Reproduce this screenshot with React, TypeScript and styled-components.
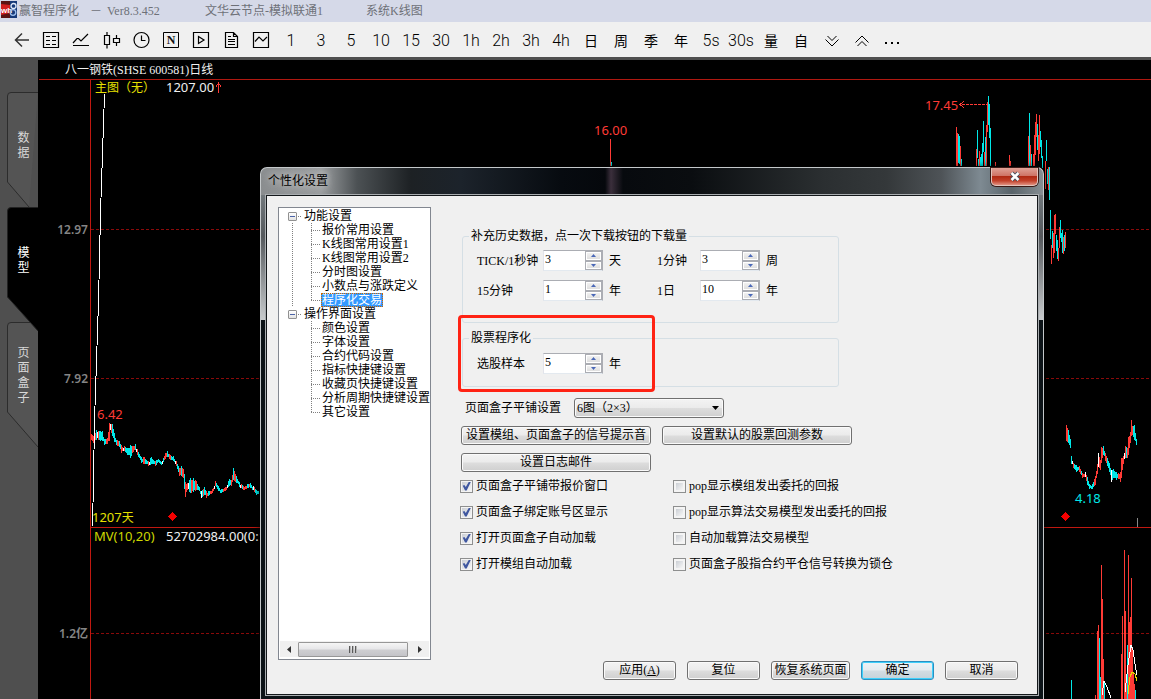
import React, { useState } from "react";
import styled, { createGlobalStyle, css } from "styled-components";

const CJK = `"Noto Sans CJK SC", sans-serif`;
const RED = "#ff3b36";
const CYAN = "#00e8e8";

const GlobalStyle = createGlobalStyle`
  * { box-sizing: border-box; }
  body { margin: 0; background: #000; font-family: "Liberation Serif", ${CJK}; font-size: 12px; line-height: 14px; color: #000; }
  button, input, select { font: inherit; color: inherit; margin: 0; }
  ul { list-style: none; margin: 0; padding: 0; }
`;

const Desktop = styled.div`
  position: relative;
  display: flex;
  flex-direction: column;
  height: 100vh;
  overflow: hidden;
`;

/* ---------- title bar and toolbar ---------- */

const TitleBar = styled.header`
  display: flex;
  align-items: center;
  height: 22px;
  padding: 0 1px;
  background: #d5d9e8;
  color: #6e7178;
  white-space: nowrap;
`;

const TitlePart = styled.span<{ $width: number }>`
  flex: none;
  width: ${(p) => p.$width}px;
`;

const ToolBar = styled.nav`
  display: flex;
  align-items: center;
  height: 35px;
  padding: 0 6px;
  background: #f0f0f0;
`;

const Tool = styled.button<{ $kind?: "latin" | "cjk" }>`
  display: flex;
  align-items: center;
  justify-content: center;
  flex: none;
  width: 30px;
  height: 30px;
  padding: ${(p) => (p.$kind ? "2px 0 0" : "0")};
  border: 0;
  background: none;
  font-family: Roboto, ${CJK};
  font-weight: ${(p) => (p.$kind === "latin" ? 300 : 400)};
  font-size: ${(p) => (p.$kind === "latin" ? 16 : 14)}px;
  line-height: 20px;
`;

const Glyph = styled.svg`
  display: block;
  width: 20px;
  height: 20px;
  fill: none;
  stroke: #000;
  stroke-width: 1;
`;

/* ---------- workspace ---------- */

const Workspace = styled.main`
  display: flex;
  flex: 1;
  min-height: 0;
  border-top: 3px solid #4f4f4f;
  background: #000;
`;

const SideTabs = styled.nav`
  flex: none;
  width: 38px;
  padding: 32px 0 0 7px;
  background: #4f4f4f;
`;

const SideTab = styled.button<{ $active?: boolean }>`
  position: relative;
  z-index: ${(p) => (p.$active ? 1 : 0)};
  display: flex;
  align-items: center;
  justify-content: center;
  width: 31px;
  height: 115px;
  padding: 0 0 8px 2px;
  border: 0;
  background: none;
  color: ${(p) => (p.$active ? "#fff" : "#d8d8d8")};
  line-height: 15px;
`;

const TabShape = styled.svg`
  position: absolute;
  inset: 0 auto auto 0;
  width: 31px;
  height: 126px;
`;

const TabText = styled.span`
  position: relative;
  width: 12px;
  white-space: normal;
  word-break: break-all;
`;

const ChartPane = styled.section`
  display: flex;
  flex-direction: column;
  flex: 1;
  min-width: 0;
`;

const ChartTitle = styled.h1`
  height: 20px;
  margin: 0 0 0 1px;
  padding-left: 26px;
  border-bottom: 1px solid #b01810;
  color: #f0f0f0;
  font-size: 12px;
  font-weight: 400;
  line-height: 20px;
`;

const Plot = styled.svg`
  display: block;
  flex: 1;
  width: 100%;
  min-height: 0;
  overflow: visible;
  font-family: "Noto Sans", ${CJK};
  font-size: 13px;
`;

/* ---------- dialog ---------- */

const Dialog = styled.section`
  position: absolute;
  z-index: 2;
  top: 167px;
  right: 107px;
  bottom: 0;
  left: 260px;
  display: flex;
  flex-direction: column;
  min-width: 784px;
  padding: 0 4px 3px;
  border: 1px solid #c4c8ca;
  border-bottom: 0;
  border-radius: 7px 7px 0 0;
  background:
    linear-gradient(90deg, #8a8d8f 0, #9a9d9f 60px, #4c5154 96px, #1d2124 150px, #1c232b 200px, #070b10 300px, #05080c 44%, #3b2f3c 350px, #070a0e 362px, #0a0d10 55%, #2b2f31 72%, #34383a 80%, #4e5357 87%, #7e8a92 92%, #59646a 96%, #868e93 100%) 0 0 / 100% 27px no-repeat,
    linear-gradient(#858d91, #55595d 45%, #c8cbcd) 0 0 / 100% 152px no-repeat,
    #0c1317;
  box-shadow: 0 0 6px 1px rgba(0, 0, 0, 0.6);
`;

const DialogBar = styled.header`
  display: flex;
  justify-content: space-between;
  flex: none;
  height: 26px;
  padding: 0 1px 0 3px;
`;

const DialogTitle = styled.h2`
  margin: 0;
  font-size: 12px;
  font-weight: 400;
  line-height: 26px;
  text-shadow: 0 0 6px #c8c8c8, 0 0 8px #c8c8c8;
`;

const CloseButton = styled.button`
  display: flex;
  align-items: center;
  justify-content: center;
  width: 47px;
  height: 18px;
  padding: 0 0 1px;
  border: 1px solid #e3c3bb;
  border-top: 0;
  border-radius: 0 0 5px 5px;
  background: linear-gradient(#dfa196, #cf7466 45%, #b02a14 50%, #c2402a 75%, #e09080);
  box-shadow: 0 0 0 1px #3a1a16;
`;

const Client = styled.div`
  display: flex;
  flex: 1;
  min-height: 0;
  border: 1px solid #a9adb0;
`;

const Body = styled.form`
  display: flex;
  flex-direction: column;
  flex: 1;
  min-width: 0;
  padding: 11px 19px 14px 11px;
  border: 1px solid #14181b;
  background: #f0f0f0;
`;

const Columns = styled.div`
  display: flex;
  gap: 30px;
  flex: 1;
  min-height: 0;
`;

/* ---------- settings tree ---------- */

const TreePane = styled.nav`
  display: flex;
  flex-direction: column;
  flex: none;
  width: 153px;
  padding: 1px 0 2px;
  border: 1px solid #828790;
  background: #fff;
`;

const TreeList = styled.ul`
  flex: 1;
  min-height: 0;
  overflow: hidden;
  white-space: nowrap;
`;

const RootRow = styled.div`
  display: flex;
  align-items: center;
  height: 14px;
  padding-left: 9px;

  &::after {
    content: "";
    order: 1;
    width: 4px;
    height: 1px;
    margin-right: 3px;
    background: repeating-linear-gradient(90deg, transparent 0 1px, #808080 1px 2px);
  }
`;

const Toggle = styled.button`
  display: flex;
  align-items: center;
  justify-content: center;
  width: 9px;
  height: 9px;
  padding: 0;
  border: 1px solid #919191;
  border-radius: 1px;
  background: linear-gradient(#fff, #e2e2e2);

  &::after {
    content: "";
    width: 5px;
    height: 1px;
    background: #4b63a7;
  }
`;

const RootLabel = styled.span`
  order: 2;
`;

const Branch = styled.ul<{ $linked?: boolean }>`
  padding-left: 32px;
  ${(p) =>
    p.$linked &&
    css`
      background: repeating-linear-gradient(#808080 0 1px, transparent 1px 2px) 13px 0 / 1px 100% no-repeat;
    `}
`;

const Leaf = styled.li`
  display: flex;
  align-items: center;
  height: 14px;

  &::before {
    content: "";
    flex: none;
    width: 9px;
    height: 14px;
    margin-right: 1px;
    background:
      repeating-linear-gradient(90deg, #808080 0 1px, transparent 1px 2px) 0 7px / 100% 1px no-repeat,
      repeating-linear-gradient(#808080 0 1px, transparent 1px 2px) 0 0 / 1px 100% no-repeat;
  }
  &:last-child::before {
    background-size: 100% 1px, 1px 8px;
  }
`;

const LeafLink = styled.a<{ $selected?: boolean }>`
  height: 14px;
  padding: 0 1px;
  color: ${(p) => (p.$selected ? "#fff" : "#000")};
  background: ${(p) => (p.$selected ? "#3399ff" : "none")};
  outline: ${(p) => (p.$selected ? "1px dotted #cc6600" : "none")};
  outline-offset: -1px;
  text-decoration: none;
`;

const ScrollBar = styled.div`
  display: flex;
  align-items: center;
  flex: none;
  height: 16px;
  margin: 0 1px;
  background: #f0f0f0;
`;

const ScrollArrow = styled.button`
  display: flex;
  align-items: center;
  justify-content: center;
  width: 18px;
  height: 16px;
  padding: 0;
  border: 0;
  background: none;
`;

const Thumb = styled.div`
  display: flex;
  align-items: center;
  justify-content: center;
  gap: 1px;
  flex: none;
  width: 110px;
  height: 15px;
  margin-right: 3px;
  border: 1px solid #979797;
  border-radius: 1px;
  background: linear-gradient(#f5f5f5, #e6e6e8 48%, #cfcfd2 52%, #c4c4c8);

  & > i {
    width: 2px;
    height: 7px;
    background: linear-gradient(90deg, #5a5a5a 50%, #b8b8b8 50%);
  }
`;

/* ---------- settings form ---------- */

const Settings = styled.div`
  display: flex;
  flex-direction: column;
  align-items: flex-start;
  flex: 1;
  min-width: 0;
`;

const Group = styled.fieldset<{ $top: number; $pad: string }>`
  position: relative;
  width: 377px;
  margin: ${(p) => p.$top}px 0 0 1px;
  padding: ${(p) => p.$pad};
  border: 1px solid #d5dfe5;
  border-radius: 3px;
`;

const GroupTitle = styled.legend`
  height: 14px;
  padding: 0 2px;
`;

const Mark = styled.span`
  position: absolute;
  inset: -30px auto auto -5px;
  width: 197px;
  height: 77px;
  border: 3px solid #ff2314;
  border-radius: 4px;
  pointer-events: none;
`;

const FieldGrid = styled.div`
  display: grid;
  grid-template-columns: 66px 60px 54px 43px 60px auto;
  align-items: center;
  row-gap: 9px;
  padding-left: 8px;
`;

const Unit = styled.span`
  padding-left: 6px;
`;

const SpinFrame = styled.div`
  display: flex;
  width: 60px;
  height: 21px;
  border: 1px solid;
  border-color: #abadb3 #abadb3 #e3e9ef #e2e3ea;
  background: #fff;
`;

const SpinInput = styled.input`
  flex: 1;
  min-width: 0;
  height: 16px;
  padding: 0 1px;
  border: 0;
  outline: 0;
  background: transparent;
  line-height: 16px;
`;

const SpinButtons = styled.div`
  display: flex;
  flex-direction: column;
  width: 17px;
  background: #f0f0f0;
`;

const SpinButton = styled.button`
  display: flex;
  align-items: center;
  justify-content: center;
  flex: 1;
  padding: 0;
  border: 1px solid #abadb3;
  box-shadow: inset 0 0 0 1px #fff;
  background: linear-gradient(#f4f4f4, #dcdcdc);
`;

const ComboRow = styled.div`
  display: flex;
  align-items: center;
  gap: 13px;
  margin-top: 11px;
  padding-left: 4px;
`;

const Combo = styled.div`
  display: grid;
  align-items: center;
  width: 150px;
  height: 20px;

  & > * {
    grid-area: 1 / 1;
  }
  & > svg {
    justify-self: end;
    margin-right: 5px;
    pointer-events: none;
  }
`;

const raised = css`
  border: 1px solid #707070;
  border-radius: 3px;
  background: linear-gradient(#f3f3f3, #ebebeb 48%, #dddddd 52%, #cfcfcf);
  box-shadow: inset 0 0 0 1px #fafafa;
`;

const ComboSelect = styled.select`
  appearance: none;
  width: 100%;
  height: 20px;
  padding: 0 18px 0 2px;
  ${raised}
`;

const PushButton = styled.button<{ $width: number; $primary?: boolean }>`
  width: ${(p) => p.$width}px;
  height: 19px;
  padding: 0;
  ${raised}
  line-height: 17px;
  white-space: nowrap;
  ${(p) =>
    p.$primary &&
    css`
      border-color: #2c8fc0;
      background: linear-gradient(#eef3f6, #e4ebef 48%, #d3dde3 52%, #c5d2da);
      box-shadow: inset 0 0 0 1px #3fd0fb;
    `}
`;

const ButtonRow = styled.div`
  display: flex;
  gap: 11px;
  margin-top: 8px;
`;

const Options = styled.div`
  display: grid;
  grid-template-columns: 213px auto;
  grid-auto-rows: 26px;
  margin-top: 1px;
  margin-left: -1px;
`;

const Option = styled.label`
  display: flex;
  align-items: center;
  gap: 3px;
  white-space: nowrap;
`;

const Tick = styled.input`
  appearance: none;
  display: block;
  flex: none;
  width: 13px;
  height: 13px;
  border: 1px solid #8e8f8f;
  background: linear-gradient(135deg, #cbcfd5, #f6f6f6) content-box, #f4f4f4;
  padding: 2px;

  &:checked {
    padding: 1px;
  }
  &:checked::after {
    content: "";
    display: block;
    width: 9px;
    height: 9px;
    background: #3f57a0;
    clip-path: polygon(8% 48%, 26% 40%, 42% 62%, 78% 0, 100% 0, 52% 100%, 34% 100%);
  }
`;

const Footer = styled.footer`
  display: flex;
  justify-content: flex-end;
  gap: 11px;
  margin-top: 1px;
`;

/* ---------- data ---------- */

type Bar = [number, number, number, 0 | 1];

const spikes: Bar[] = [
  [610, 139, 166, 1], [611, 162, 166, 0],
  [956, 127, 166, 1], [957, 133, 166, 1], [958, 134, 163, 0], [959, 136, 164, 0], [960, 146, 166, 1], [961, 159, 166, 0],
  [976, 149, 166, 1], [977, 130, 158, 0], [978, 159, 166, 0], [979, 151, 166, 1], [980, 157, 166, 0], [981, 154, 166, 0],
  [982, 143, 166, 0], [983, 121, 152, 0], [984, 152, 166, 1], [985, 137, 166, 0], [986, 125, 166, 1], [987, 102, 132, 1],
  [988, 96, 125, 0], [989, 104, 138, 0], [990, 128, 166, 0],
  [995, 162, 166, 1], [1009, 155, 166, 1], [1010, 161, 166, 1],
  [1028, 136, 166, 1], [1029, 113, 166, 0], [1030, 145, 166, 1], [1031, 154, 166, 0], [1033, 154, 166, 1],
  [1034, 135, 166, 1], [1035, 122, 155, 1], [1036, 114, 137, 1], [1037, 124, 150, 0], [1038, 135, 161, 1],
  [1039, 115, 154, 1], [1040, 131, 147, 0], [1041, 140, 158, 0], [1042, 156, 168, 0],
  [1045, 161, 189, 1], [1046, 140, 161, 0], [1047, 169, 184, 0], [1048, 167, 190, 1], [1049, 167, 200, 0],
  [1050, 210, 239, 0], [1051, 245, 264, 1], [1052, 231, 248, 0], [1053, 233, 258, 1], [1054, 215, 253, 1],
  [1055, 214, 234, 1], [1056, 235, 251, 0], [1057, 240, 259, 0], [1058, 248, 261, 1], [1059, 227, 248, 1],
  [1060, 220, 238, 0], [1061, 233, 242, 0], [1062, 230, 253, 0], [1063, 237, 254, 1], [1064, 235, 251, 0], [1065, 232, 248, 1],
];

const volumes: Bar[] = [
  [1071, 680, 0, 0], [1095, 695, 0, 1], [1097, 631, 0, 1], [1098, 625, 0, 1], [1099, 638, 0, 0], [1100, 677, 0, 0],
  [1101, 565, 0, 1], [1102, 599, 0, 1], [1103, 659, 0, 1], [1104, 681, 0, 0], [1121, 654, 0, 1], [1122, 616, 0, 1],
  [1124, 550, 0, 1], [1125, 611, 0, 1], [1126, 680, 0, 1], [1127, 645, 0, 0], [1128, 555, 0, 1], [1129, 622, 0, 1],
  [1130, 617, 0, 1], [1131, 578, 0, 1], [1132, 650, 0, 1], [1133, 672, 0, 1], [1134, 684, 0, 1], [1135, 690, 0, 0],
];

/* daily ranges, each as x, high, low */
type Range = [number, number, number];

const early: Range[] = [
  [91, 434, 440], [93, 436, 443], [96, 430, 440], [100, 431, 441], [102, 431, 441], [104, 439, 445], [107, 438, 444], [109, 423, 441],
  [110, 424, 430], [112, 424, 436], [114, 433, 442], [116, 440, 445], [119, 441, 447], [121, 445, 453], [124, 446, 451],
  [127, 448, 455], [130, 445, 458], [133, 446, 452], [135, 444, 450], [138, 452, 457], [141, 457, 463], [144, 457, 464],
  [148, 461, 466], [151, 457, 464], [155, 461, 466], [158, 459, 462], [162, 461, 464], [165, 453, 459], [167, 451, 457],
  [170, 455, 460], [173, 456, 461], [176, 461, 466], [179, 468, 476], [181, 466, 476], [183, 469, 478], [184, 474, 489],
  [185, 482, 497], [187, 483, 490], [190, 478, 493], [191, 480, 493], [193, 478, 492], [196, 481, 490], [199, 487, 491],
  [201, 491, 498], [204, 487, 495], [206, 491, 498], [209, 491, 495], [212, 489, 493], [215, 481, 486], [218, 486, 491],
  [221, 489, 493], [225, 487, 491], [229, 479, 486], [231, 480, 486], [233, 468, 480], [236, 476, 483], [239, 482, 487],
  [243, 486, 490], [247, 484, 488], [250, 483, 488], [253, 486, 490], [256, 490, 495], [259, 490, 496],
];

const late: Range[] = [
  [1066, 425, 441], [1068, 430, 443], [1070, 439, 448], [1071, 456, 464], [1073, 463, 468], [1076, 465, 472], [1079, 466, 472],
  [1082, 473, 478], [1085, 472, 477], [1087, 477, 485], [1089, 484, 489], [1092, 484, 489], [1095, 476, 485], [1097, 464, 474],
  [1098, 453, 467], [1100, 460, 470], [1101, 447, 463], [1103, 446, 455], [1105, 453, 461], [1107, 458, 466], [1109, 463, 472],
  [1111, 470, 482], [1113, 469, 478], [1116, 472, 480], [1119, 474, 479], [1120, 472, 482], [1121, 458, 478], [1123, 456, 464],
  [1125, 446, 458], [1127, 448, 458], [1128, 437, 455], [1130, 432, 443], [1131, 420, 436], [1132, 426, 435], [1134, 425, 440],
  [1136, 439, 445], [1137, 438, 446],
];

function fillRanges(points: Range[]) {
  const out: { x: number; y: number; h: number; c: string }[] = [];
  for (let i = 0; i < points.length - 1; i++) {
    const [x0, a0, b0] = points[i];
    const [x1, a1, b1] = points[i + 1];
    for (let x = x0; x < x1; x++) {
      const t = (x - x0) / (x1 - x0);
      const n = ((x * 7919) % 13) / 13;
      const top = Math.round(a0 + (a1 - a0) * t + (t ? n * 2 : 0));
      const low = Math.round(b0 + (b1 - b0) * t - (t ? n * 2 : 0));
      const rising = a1 + b1 < a0 + b0;
      const c = n > 0.9 ? "#fff" : rising !== n < 0.16 ? RED : CYAN;
      out.push({ x, y: top, h: Math.max(3, low - top), c });
    }
  }
  return out;
}

const candles = [...fillRanges(early), ...fillRanges(late)];

/* ---------- pieces ---------- */

const icons: Record<string, React.ReactNode> = {
  返回: <path d="M4.500 10H18M11 3.500L4.500 10L11 16.500" stroke="#333" strokeWidth="1.500" />,
  报价: <path d="M2.500 2.500H17.500V17.500H2.500ZM5 6.500H9M5 10.500H9M5 14.500H9M11 6.500H15M11 10.500H15M11 14.500H15" strokeWidth="1.200" />,
  分时: <path d="M2 13L6 8.500L7.500 8.500L10 11L17 4M2 15.500H18" strokeWidth="1.200" />,
  K线: <path d="M3.500 5.500H8.500V14.500H3.500ZM6 2V5.500M6 14.500V18.500M12.500 8.500H18.500V12.500H12.500ZM15.500 5V8.500M15.500 12.500V16" strokeWidth="1.200" />,
  时钟: <path d="M10.500 2.500A7.500 7.500 0 1 1 10.500 17.500A7.500 7.500 0 1 1 10.500 2.500M10.500 5.500V10.500H14.500" strokeWidth="1.200" />,
  新闻: (
    <>
      <path d="M2.500 2.500H17.500V17.500H2.500Z" />
      <text x="10" y="14" textAnchor="middle" fontFamily="Liberation Serif, serif" fontSize="12" fontWeight="700" fill="#111" stroke="none">
        N
      </text>
    </>
  ),
  播放: <path d="M2.500 2.500H17.500V17.500H2.500ZM7.500 6.500L13 10L7.500 13.500Z" strokeWidth="1.200" />,
  文档: <path d="M4.500 2.500H12.500L16.500 6.500V17.500H4.500ZM12.500 2.500V6.500H16.500M7 6.500H10M7 9.500H14M7 11.500H14M7 14.500H14" strokeWidth="1.200" />,
  走势: <path d="M2.500 2.500H17.500V17.500H2.500ZM4 11.500L8 7L12 11L16 7" strokeWidth="1.200" />,
  向下: <path d="M6.500 6L11 10.500L15.500 6M4.500 9.500L11 16L17.500 9.500" />,
  向上: <path d="M6.500 16L11 11.500L15.500 16M4.500 12.500L11 6L17.500 12.500" />,
  更多: <path d="M4 13H6M10 13H12M16 13H18" strokeWidth="2" />,
};

const leftTools = ["返回", "报价", "分时", "K线", "时钟", "新闻", "播放", "文档", "走势"];
const periods = ["1", "3", "5", "10", "15", "30", "1h", "2h", "3h", "4h", "日", "周", "季", "年", "5s", "30s", "量", "自"];
const rightTools = ["向下", "向上", "更多"];

function IconTool({ name }: { name: string }) {
  return (
    <Tool aria-label={name}>
      <Glyph viewBox="0 0 20 20">{icons[name]}</Glyph>
    </Tool>
  );
}

function Logo() {
  return (
    <svg width="16" height="17" viewBox="0 0 16 17">
      <rect width="9" height="17" fill="#d32020" />
      <rect x="9" width="7" height="17" fill="#173a78" />
      <path d="M0 0H9V4L0 3ZM0 14L9 12V17H0Z" fill="#5a1414" />
      <text x="0" y="12" fontFamily="Liberation Sans, sans-serif" fontSize="8" fontWeight="700" fill="#fff">wh</text>
      <circle cx="12.500" cy="5" r="2.500" fill="none" stroke="#dfe8f8" strokeWidth="1.300" />
      <circle cx="12" cy="11.500" r="2.800" fill="none" stroke="#9fc0ee" strokeWidth="1.300" />
    </svg>
  );
}

function SpinBox({ id, initial }: { id: string; initial: number }) {
  const [value, setValue] = useState(String(initial));
  const step = (d: number) => setValue((v) => String((Number(v) || 0) + d));
  return (
    <SpinFrame>
      <SpinInput id={id} value={value} onChange={(e) => setValue(e.target.value)} />
      <SpinButtons>
        <SpinButton type="button" aria-label="增加" onClick={() => step(1)}>
          <svg width="5" height="3"><path d="M0 3L2.500 0L5 3Z" fill="#4a68b8" /></svg>
        </SpinButton>
        <SpinButton type="button" aria-label="减少" onClick={() => step(-1)}>
          <svg width="5" height="3"><path d="M0 0L2.500 3L5 0Z" fill="#4a68b8" /></svg>
        </SpinButton>
      </SpinButtons>
    </SpinFrame>
  );
}

function Field({ id, label, unit, value }: { id: string; label: string; unit: string; value: number }) {
  return (
    <>
      <label htmlFor={id}>{label}</label>
      <SpinBox id={id} initial={value} />
      <Unit>{unit}</Unit>
    </>
  );
}

function TreeGroup({ label, items, selected, linked }: { label: string; items: string[]; selected?: string; linked?: boolean }) {
  return (
    <li>
      <RootRow>
        <Toggle type="button" aria-label={`折叠${label}`} />
        <RootLabel>{label}</RootLabel>
      </RootRow>
      <Branch $linked={linked}>
        {items.map((item) => (
          <Leaf key={item}>
            <LeafLink href="#" $selected={item === selected}>{item}</LeafLink>
          </Leaf>
        ))}
      </Branch>
    </li>
  );
}

const options: [string, boolean][] = [
  ["页面盒子平铺带报价窗口", true],
  ["pop显示模组发出委托的回报", false],
  ["页面盒子绑定账号区显示", true],
  ["pop显示算法交易模型发出委托的回报", false],
  ["打开页面盒子自动加载", true],
  ["自动加载算法交易模型", false],
  ["打开模组自动加载", true],
  ["页面盒子股指合约平仓信号转换为锁仓", false],
];

function Chart() {
  return (
    <Plot>
      <g transform="translate(-38 -80)">
        <g shapeRendering="crispEdges">
          <path d="M91 229.500H4000M91 378.500H4000M91 633.500H4000" stroke="#8a0a0a" strokeDasharray="3 2" fill="none" />
          <path d="M90.500 80V3000M90 527.500H4000" stroke="#c01810" fill="none" />
          {candles.map((b) => (
            <rect key={b.x} x={b.x} y={b.y} width="1" height={b.h} fill={b.c} />
          ))}
          {spikes.map(([x, top, low, up]) => (
            <rect key={x} x={x} y={top} width="1" height={low - top} fill={up ? RED : CYAN} />
          ))}
          {volumes.map(([x, top, , up]) => (
            <rect key={x} x={x} y={top} width="1" height={699 - top} fill={up ? RED : CYAN} />
          ))}
          <path d="M104.500 94L103.500 124L100.500 213L98.500 302L96.500 361L95.500 392L94.500 420L93.500 480L92.500 526" stroke="#fff" fill="none" />
          <path d="M1102 695L1104 681L1107 687L1111 698M1125 692L1128 665L1131 645L1133 650L1135 664L1137 675" stroke="#fff" fill="none" />
          <path d="M1128 694L1130 677L1132 672L1135 674L1137 681" stroke="#e6d800" fill="none" />
          <path d="M1137.500 518V527" stroke="#888" />
          <path d="M962 104.500H987" stroke={RED} strokeDasharray="3 1" />
          <path d="M964 101.500L960 104.500L964 107.500" stroke={RED} fill="none" />
          <path d="M218.500 83V93M216 86.500L218.500 83L221 86.500" stroke={RED} fill="none" />
          <path d="M172.500 512L177 516.500L172.500 521L168 516.500ZM1065.500 512L1070 516.500L1065.500 521L1061 516.500Z" fill="#f40000" />
        </g>
        <g fill="#e6e000">
          <text x="95" y="92" fontSize="12">主图（无）</text>
          <text x="92" y="522">1207<tspan fontSize="12">天</tspan></text>
          <text x="94" y="541" fill="#cdd800">MV(10,20)</text>
        </g>
        <g fill="#f0f0f0">
          <text x="166" y="92">1207.00</text>
          <text x="166" y="541">52702984.00(0:12)</text>
        </g>
        <g fill={RED}>
          <text x="97" y="419">6.42</text>
          <text x="594" y="135">16.00</text>
          <text x="925" y="110">17.45</text>
        </g>
        <text x="1075" y="503" fill={CYAN}>4.18</text>
        <g fill="#858585" textAnchor="end" fontSize="12" fontWeight="600">
          <text x="88" y="234">12.97</text>
          <text x="88" y="383">7.92</text>
          <text x="88" y="638">1.2亿</text>
        </g>
      </g>
    </Plot>
  );
}

export default function App() {
  return (
    <Desktop>
      <GlobalStyle />
      <TitleBar>
        <TitlePart $width={18}><Logo /></TitlePart>
        <TitlePart $width={71}>赢智程序化</TitlePart>
        <TitlePart $width={17}>－</TitlePart>
        <TitlePart $width={98}>Ver8.3.452</TitlePart>
        <TitlePart $width={161}>文华云节点-模拟联通1</TitlePart>
        <span>系统K线图</span>
      </TitleBar>
      <ToolBar>
        {leftTools.map((n) => <IconTool key={n} name={n} />)}
        {periods.map((p) => (
          <Tool key={p} $kind={/[a-z0-9]/.test(p) ? "latin" : "cjk"}>{p}</Tool>
        ))}
        {rightTools.map((n) => <IconTool key={n} name={n} />)}
      </ToolBar>
      <Workspace>
        <SideTabs>
          <SideTab>
            <TabShape><path d="M31 .5H4Q.5 .5 .5 4V90L22 115" fill="#545454" stroke="#2c2c2c" /></TabShape>
            <TabText>数据</TabText>
          </SideTab>
          <SideTab $active>
            <TabShape><path d="M32 .5H4Q.5 .5 .5 4V90L32 125Z" fill="#000" stroke="#222" /></TabShape>
            <TabText>模型</TabText>
          </SideTab>
          <SideTab>
            <TabShape><path d="M31 .5H4Q.5 .5 .5 4V90L31 125" fill="#545454" stroke="#2c2c2c" /></TabShape>
            <TabText>页面盒子</TabText>
          </SideTab>
        </SideTabs>
        <ChartPane>
          <ChartTitle>八一钢铁(SHSE 600581)日线</ChartTitle>
          <Chart />
        </ChartPane>
      </Workspace>

      <Dialog role="dialog" aria-label="个性化设置">
        <DialogBar>
          <DialogTitle>个性化设置</DialogTitle>
          <CloseButton aria-label="关闭">
            <svg width="12" height="11" viewBox="0 0 12 11">
              <path d="M2.500 2L9.500 9M9.500 2L2.500 9" stroke="#4a4f5c" strokeWidth="4.500" />
              <path d="M2.500 2L9.500 9M9.500 2L2.500 9" stroke="#fff" strokeWidth="2.500" />
            </svg>
          </CloseButton>
        </DialogBar>
        <Client>
          <Body onSubmit={(e) => e.preventDefault()}>
            <Columns>
              <TreePane>
                <TreeList>
                  <TreeGroup
                    label="功能设置"
                    linked
                    selected="程序化交易"
                    items={["报价常用设置", "K线图常用设置1", "K线图常用设置2", "分时图设置", "小数点与涨跌定义", "程序化交易"]}
                  />
                  <TreeGroup
                    label="操作界面设置"
                    items={["颜色设置", "字体设置", "合约代码设置", "指标快捷键设置", "收藏页快捷键设置", "分析周期快捷键设置", "其它设置"]}
                  />
                </TreeList>
                <ScrollBar>
                  <ScrollArrow type="button" aria-label="向左滚动">
                    <svg width="4" height="7"><path d="M4 0L0 3.500L4 7Z" fill="#333" /></svg>
                  </ScrollArrow>
                  <Thumb><i /><i /><i /></Thumb>
                  <ScrollArrow type="button" aria-label="向右滚动">
                    <svg width="4" height="7"><path d="M0 0L4 3.500L0 7Z" fill="#333" /></svg>
                  </ScrollArrow>
                </ScrollBar>
              </TreePane>

              <Settings>
                <Group $top={22} $pad="7px 6px 21px">
                  <GroupTitle>补充历史数据，点一次下载按钮的下载量</GroupTitle>
                  <FieldGrid>
                    <Field id="tick" label="TICK/1秒钟" unit="天" value={3} />
                    <Field id="min1" label="1分钟" unit="周" value={3} />
                    <Field id="min15" label="15分钟" unit="年" value={1} />
                    <Field id="day1" label="1日" unit="年" value={10} />
                  </FieldGrid>
                </Group>
                <Group $top={8} $pad="8px 6px 12px">
                  <GroupTitle>股票程序化</GroupTitle>
                  <FieldGrid>
                    <Field id="sample" label="选股样本" unit="年" value={5} />
                  </FieldGrid>
                  <Mark />
                </Group>
                <ComboRow>
                  <label htmlFor="tile">页面盒子平铺设置</label>
                  <Combo>
                    <ComboSelect id="tile">
                      <option>6图（2×3）</option>
                    </ComboSelect>
                    <svg width="7" height="4"><path d="M0 0H7L3.500 4Z" /></svg>
                  </Combo>
                </ComboRow>
                <ButtonRow>
                  <PushButton type="button" $width={190}>设置模组、页面盒子的信号提示音</PushButton>
                  <PushButton type="button" $width={190}>设置默认的股票回测参数</PushButton>
                </ButtonRow>
                <ButtonRow>
                  <PushButton type="button" $width={190}>设置日志邮件</PushButton>
                </ButtonRow>
                <Options>
                  {options.map(([text, on]) => (
                    <Option key={text}>
                      <Tick type="checkbox" defaultChecked={on} />
                      {text}
                    </Option>
                  ))}
                </Options>
              </Settings>
            </Columns>
            <Footer>
              <PushButton type="button" $width={73}>应用(<u>A</u>)</PushButton>
              <PushButton type="button" $width={73}>复位</PushButton>
              <PushButton type="button" $width={79}>恢复系统页面</PushButton>
              <PushButton type="submit" $width={73} $primary>确定</PushButton>
              <PushButton type="button" $width={73}>取消</PushButton>
            </Footer>
          </Body>
        </Client>
      </Dialog>
    </Desktop>
  );
}
